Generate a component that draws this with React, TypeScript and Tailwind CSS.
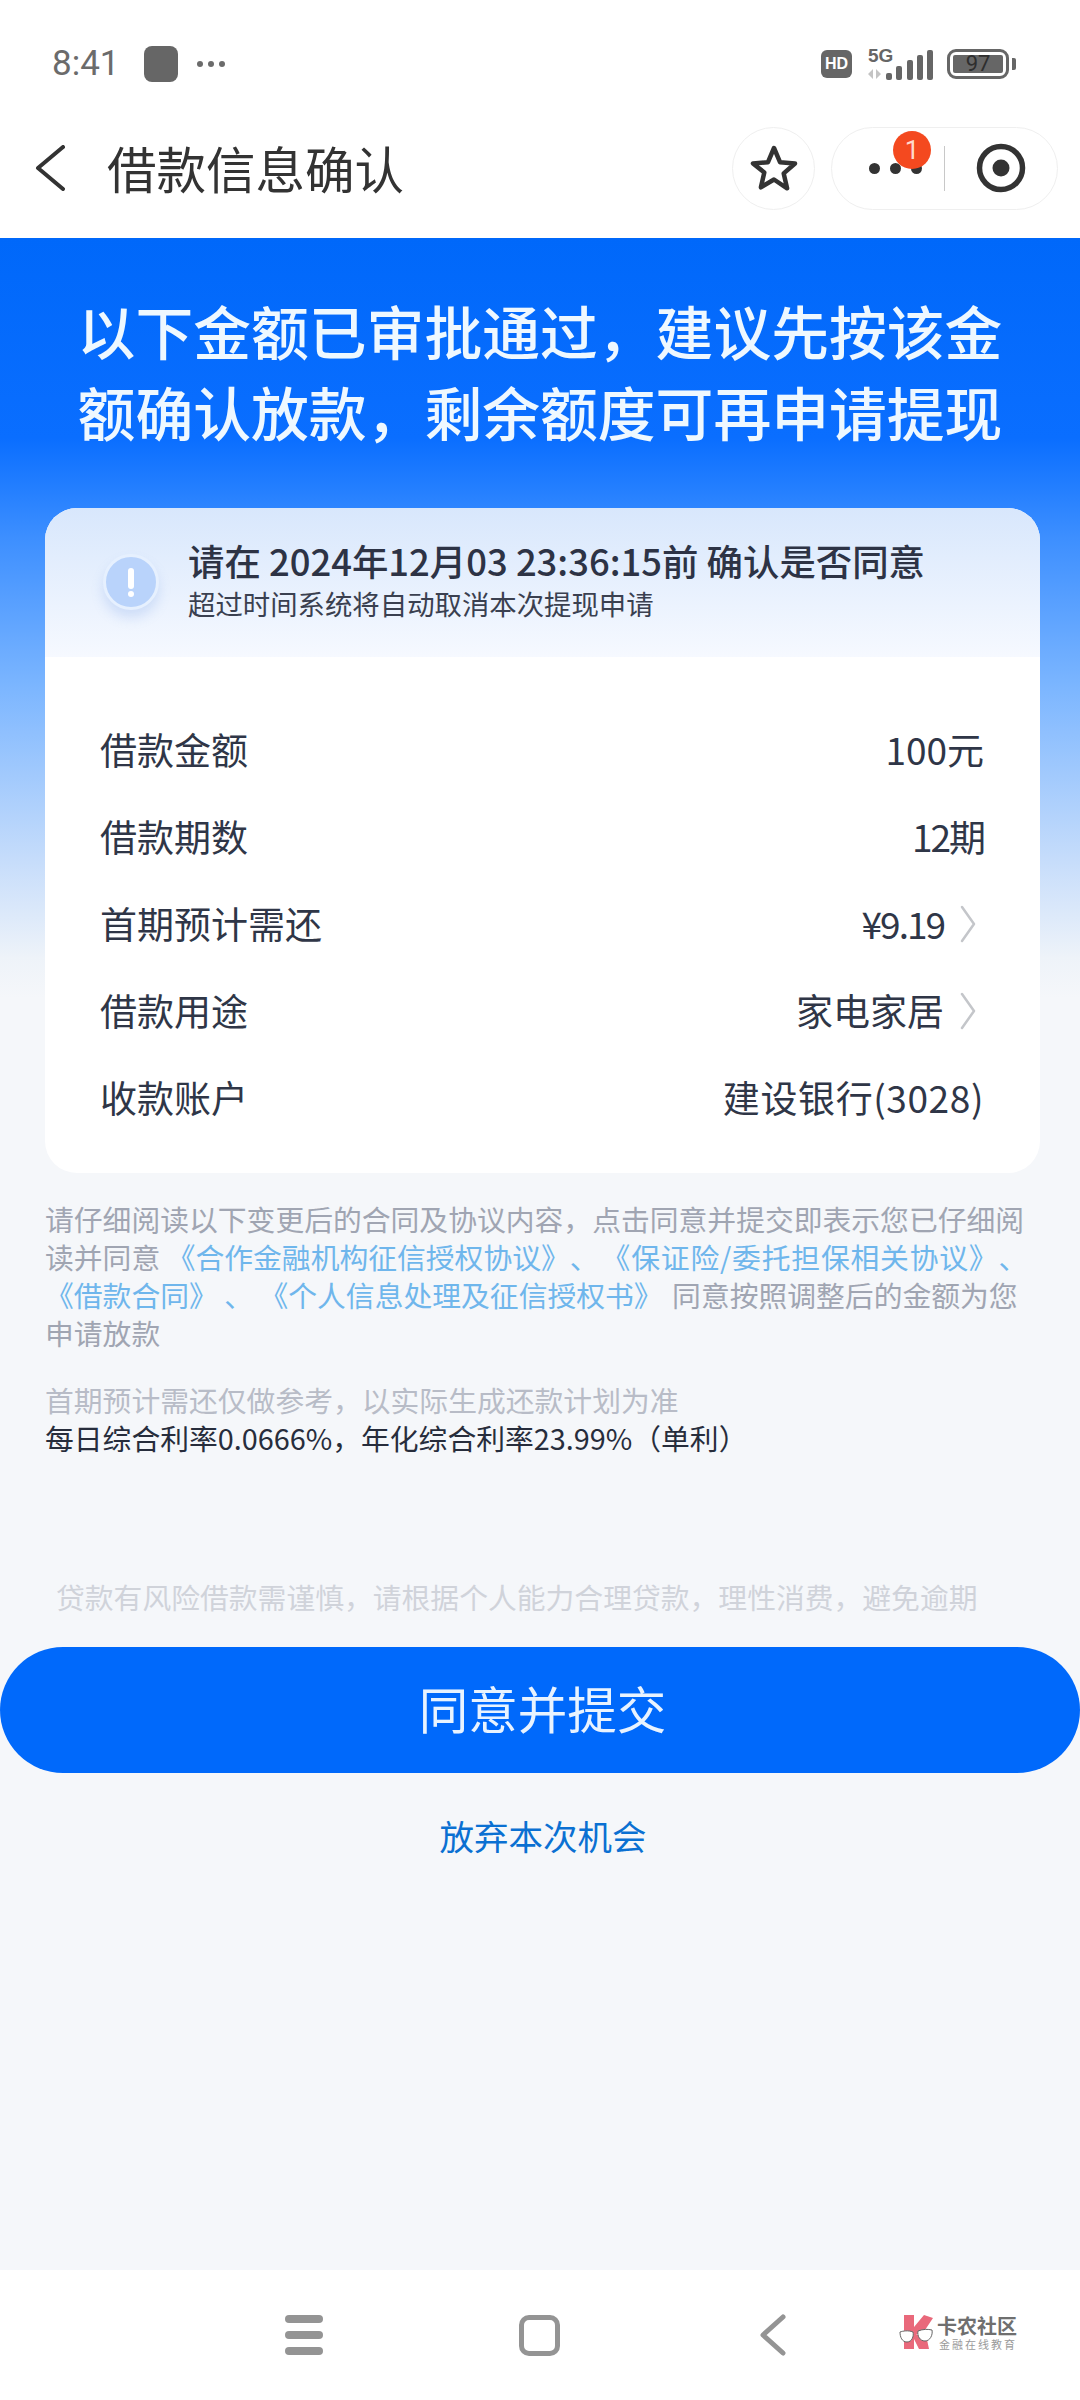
const rows = [
  { label: "借款金额", value: "100元" },
  { label: "借款期数", value: "12期", valueClass: "tracking-[-2px]" },
  { label: "首期预计需还", value: "¥9.19", arrow: true, valueClass: "tracking-[-2px]" },
  { label: "借款用途", value: "家电家居", arrow: true },
  { label: "收款账户", value: "建设银行(3028)", valueClass: "tracking-[0.6px]" },
];

function StatusBar() {
  return (
    <div className="flex h-[100px] items-center justify-between pl-[52px] pr-[64px] pt-[28px] text-[#6b6b6b]">
      <div className="flex items-center">
        <span className="w-[70px] text-[35px] leading-[40px] font-['Roboto',sans-serif]">8:41</span>
        <span className="ml-[22px] h-[36px] w-[34px] rounded-[8px] bg-[#666666]" />
        <span className="ml-[19px] flex gap-[5px]">
          <i className="h-[6px] w-[6px] rounded-full bg-[#6b6b6b]" />
          <i className="h-[6px] w-[6px] rounded-full bg-[#6b6b6b]" />
          <i className="h-[6px] w-[6px] rounded-full bg-[#6b6b6b]" />
        </span>
      </div>
      <div className="flex items-center">
        <span className="flex h-[28px] w-[31px] items-center justify-center rounded-[6px] bg-[#666666] text-[16px] leading-none font-bold text-white font-['Liberation_Sans',sans-serif]">
          HD
        </span>
        <svg width="66" height="32" viewBox="0 0 66 32" className="ml-[15px] overflow-visible">
          <text x="1" y="14" fontSize="19" fontWeight="700" fill="#666" fontFamily="Liberation Sans, sans-serif">5G</text>
          <path d="M6 21v10l-5-5zM9 21l5 5-5 5z" fill="#c4c4c4" />
          <rect x="19" y="25" width="6" height="7" rx="2" fill="#666" />
          <rect x="29" y="18" width="6" height="14" rx="2" fill="#666" />
          <rect x="40" y="12" width="6" height="20" rx="2" fill="#666" />
          <rect x="50" y="7" width="6" height="25" rx="2" fill="#666" />
          <rect x="60" y="2" width="6" height="30" rx="2" fill="#666" />
        </svg>
        <span className="ml-[14px] flex h-[30px] w-[62px] items-center justify-center rounded-[9px] border-[3px] border-[#666666] p-[3px]">
          <span className="flex h-full w-full items-center justify-center rounded-[2px] bg-[#666666] text-[22px] leading-none text-[#2e2e2e] font-['Roboto',sans-serif]">
            97
          </span>
        </span>
        <span className="ml-[3px] h-[12px] w-[4px] rounded-r-[2px] bg-[#666666]" />
      </div>
    </div>
  );
}

function NavBar() {
  return (
    <div className="flex h-[138px] items-center justify-between pl-[35px] pr-[22px] pb-[2px]">
      <div className="flex items-center">
        <svg width="30" height="46" viewBox="0 0 30 46" fill="none" stroke="#333333" strokeWidth="4" strokeLinecap="round" strokeLinejoin="round">
          <path d="M28 2 3 23l25 21" />
        </svg>
        <span className="ml-[42px] text-[49.5px] leading-[60px] text-[#333333]">借款信息确认</span>
      </div>
      <div className="flex items-center gap-[16px]">
        <div className="flex h-[83px] w-[83px] items-center justify-center rounded-full border border-[#efefef]">
          <svg width="48" height="48" viewBox="0 0 48 48" fill="none" stroke="#333333" strokeWidth="4.5" strokeLinejoin="round">
            <path d="M24 4l6 14.2 15 1.3-11.300 9.900 3.400 14.900L24 35.500l-13.100 7.800 3.400-14.900L3 19.500l15-1.300z" />
          </svg>
        </div>
        <div className="relative flex h-[83px] w-[227px] items-center rounded-full border border-[#efefef]">
          <div className="flex w-[90px] items-center justify-end gap-[10px]">
            <i className="h-[11px] w-[11px] rounded-full bg-[#333333]" />
            <i className="h-[11px] w-[11px] rounded-full bg-[#333333]" />
            <i className="h-[11px] w-[11px] rounded-full bg-[#333333]" />
          </div>
          <span className="absolute left-[61px] top-[3px] flex h-[38px] w-[38px] items-center justify-center rounded-full bg-[#f4491f] text-[26px] leading-none text-[#ffd9cc] font-['Roboto',sans-serif]">
            1
          </span>
          <span className="ml-[22px] h-[45px] w-px bg-[#c8c8c8]" />
          <svg width="50" height="50" viewBox="0 0 50 50" className="ml-[31px]" fill="none">
            <circle cx="25" cy="25" r="21.500" stroke="#333333" strokeWidth="5.500" />
            <circle cx="25" cy="25" r="8.500" fill="#333333" />
          </svg>
        </div>
      </div>
    </div>
  );
}

function DetailRow({ label, value, arrow, valueClass }: { label: string; value: string; arrow?: boolean; valueClass?: string }) {
  return (
    <div className="flex h-[87px] items-center justify-between">
      <span>{label}</span>
      <span className="flex items-center">
        <span className={valueClass}>{value}</span>
        {arrow && (
          <svg width="18" height="38" viewBox="0 0 18 38" className="ml-[15px] mr-[7px]" fill="none" stroke="#c4c6ca" strokeWidth="2.500" strokeLinecap="round" strokeLinejoin="round">
            <path d="M3 2l12 17L3 36" />
          </svg>
        )}
      </span>
    </div>
  );
}

function BottomBar() {
  return (
    <div className="flex h-[130px] items-center bg-white pl-[285px]">
      <div className="flex w-[38px] flex-col gap-[8px]">
        <i className="h-[8px] rounded-full bg-[#949494]" />
        <i className="h-[8px] rounded-full bg-[#949494]" />
        <i className="h-[8px] rounded-full bg-[#949494]" />
      </div>
      <span className="ml-[196px] h-[41px] w-[41px] rounded-[10px] border-[5px] border-[#949494]" />
      <svg width="26" height="42" viewBox="0 0 26 42" className="ml-[200px]" fill="none" stroke="#949494" strokeWidth="5" strokeLinecap="round" strokeLinejoin="round">
        <path d="M23 3 3 21l20 18" />
      </svg>
      {/* 卡农 logo */}
      <div className="ml-[113px] flex items-center pb-[5px]">
        <svg width="38" height="36" viewBox="0 0 38 36">
          <path d="M5 0h10v12L25 0l9 3-8 12-9 5 3 0 7 0 3 14H20l-5-10v10H5z" fill="#e9697b" />
          <path d="M1 17c3-1 8-2 13 0 1 4-1 10-6 10S1 22 1 17zM19 16c5-2 10-2 14-1 1 5-2 11-7 11s-8-5-7-10z" fill="#fff" stroke="#666" strokeWidth="1" />
        </svg>
        <div className="flex flex-col items-end">
          <span className="text-[20px] leading-[22px] font-bold text-[#6f6f6f]">卡农社区</span>
          <span className="text-[11px] leading-[14px] tracking-[2px] text-[#9a9a9a]">金融在线教育</span>
        </div>
      </div>
    </div>
  );
}

export default function App() {
  return (
    <div className="flex h-[2400px] w-[1080px] flex-col overflow-hidden bg-white font-['Noto_Sans_CJK_SC','Noto_Sans',sans-serif] [text-spacing-trim:space-all]">
      <StatusBar />
      <NavBar />

      <main className="flex flex-1 flex-col bg-[linear-gradient(180deg,#0068fa_0px,#0a6eff_200px,#3d8fff_300px,#7cb6ff_450px,#c5dcfb_620px,#eef3f9_720px,#f5f7fa_760px)]">
        <h1 className="pt-[52px] text-center text-[57.8px] leading-[81px] font-medium text-[#eef8ff]">
          {"以下金额已审批通过\uFF0C建议先按该金"}
          <br />
          {"额确认放款\uFF0C剩余额度可再申请提现"}
        </h1>

        <section className="ml-[45px] mr-[40px] mt-[56px] overflow-hidden rounded-[32px] bg-white">
          <div className="flex h-[149px] items-start bg-[linear-gradient(180deg,#d8e7fc,#f6f9ff)] pl-[58px] pt-[27px]">
            <div className="mt-[19px] flex h-[56px] w-[56px] shrink-0 flex-col items-center justify-center gap-[2px] rounded-full border-[3px] border-[#e6f0fe] bg-[#b9d3fb] shadow-[0_8px_12px_rgba(120,160,230,0.25)]">
              <i className="h-[21px] w-[6px] rounded-full bg-white" />
              <i className="h-[6px] w-[6px] rounded-full bg-white" />
            </div>
            <div className="ml-[29px]">
              <p className="text-[36.4px] leading-[50px] font-medium whitespace-nowrap text-[#2d3345]">
                请在 2024年12月03 23:36:15前 确认是否同意
              </p>
              <p className="text-[27.4px] leading-[36px] text-[#3a4050]">超过时间系统将自动取消本次提现申请</p>
            </div>
          </div>
          <div className="pl-[55px] pr-[56px] pb-[32px] pt-[49px] text-[37px] text-[#2f3647]">
            {rows.map((row) => (
              <DetailRow key={row.label} {...row} />
            ))}
          </div>
        </section>

        <div className="mx-[45px] mt-[27px] text-[28.8px] leading-[38px] text-[#a0a5b2]">
          <p className="whitespace-nowrap">
            {"请仔细阅读以下变更后的合同及协议内容\uFF0C点击同意并提交即表示您已仔细阅"}
            <br />
            读并同意 <span className="text-[#6fb6ec]">《合作金融机构征信授权协议》、</span>
            <span className="ml-[3px] tracking-[0.8px] text-[#6fb6ec]">《保证险/委托担保相关协议》、</span>
            <br />
            <span className="text-[#6fb6ec]">《借款合同》 、 《个人信息处理及征信授权书》</span>
            <span className="ml-[3px]"> 同意按照调整后的金额为您</span>
            <br />
            申请放款
          </p>
          <p className="mt-[29px] text-[#b8bcc7]">{"首期预计需还仅做参考\uFF0C以实际生成还款计划为准"}</p>
          <p className="text-[#272d3c]">{"每日综合利率0.0666%\uFF0C年化综合利率23.99%\uFF08单利\uFF09"}</p>
        </div>

        <p className="mt-[121px] pl-[56px] text-[28.8px] leading-[38px] whitespace-nowrap text-[#d0d3da]">
          {"贷款有风险借款需谨慎\uFF0C请根据个人能力合理贷款\uFF0C理性消费\uFF0C避免逾期"}
        </p>

        <button className="mt-[31px] h-[126px] w-full rounded-full bg-[#0069fb] pb-[4px] pl-[5px] text-[49.5px] text-[#e8f3ff]">同意并提交</button>

        <p className="mt-[37px] pl-[6px] text-center text-[34.500px] leading-[50px] text-[#0a70d2]">放弃本次机会</p>
      </main>

      <BottomBar />
    </div>
  );
}
